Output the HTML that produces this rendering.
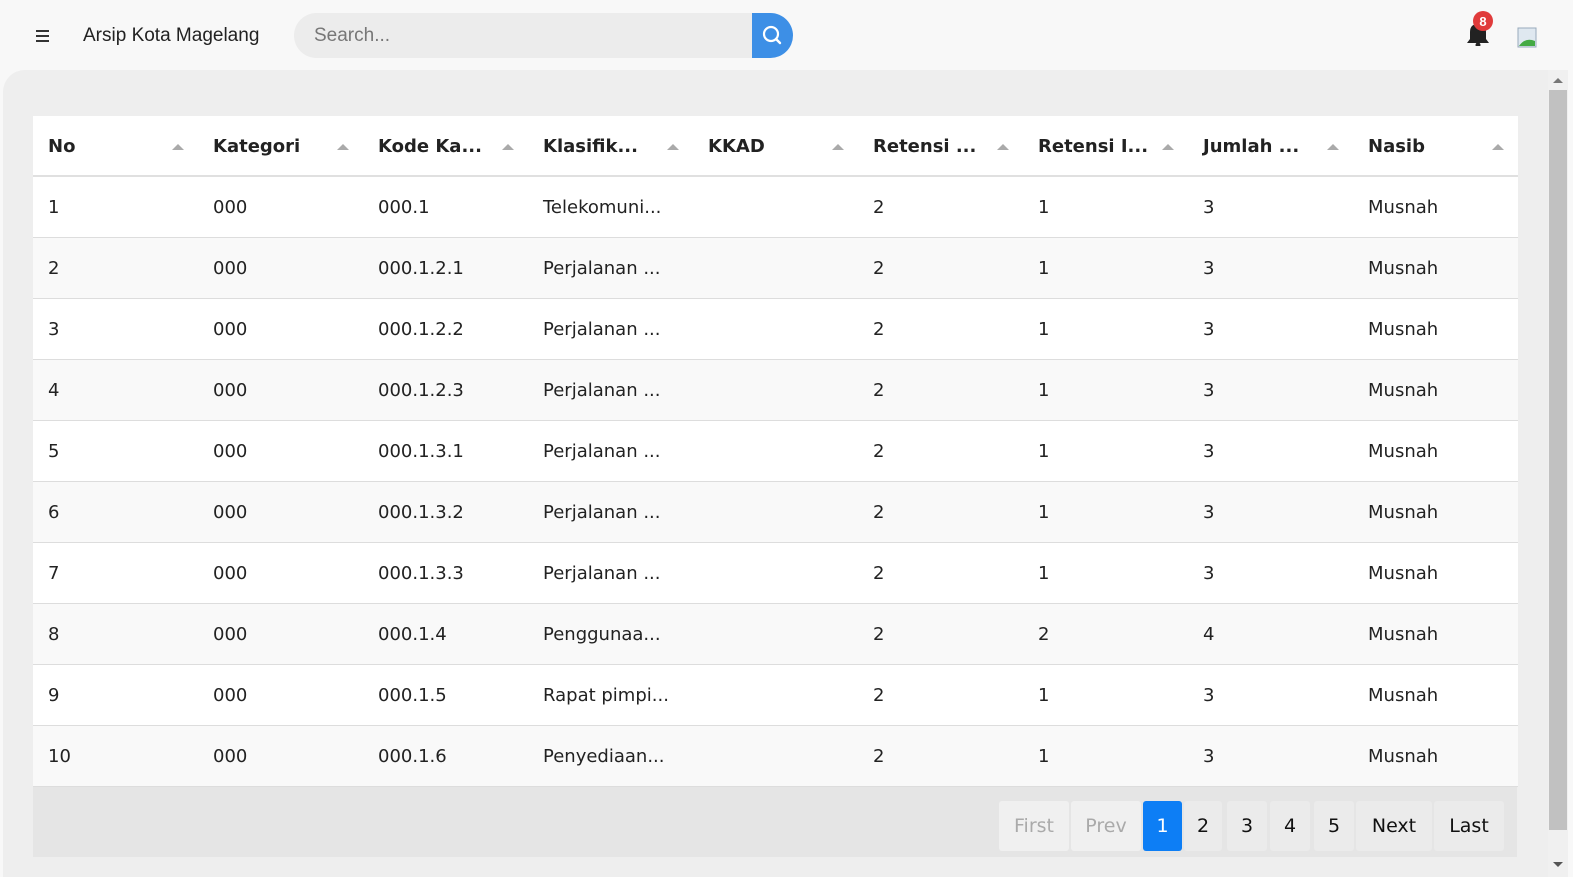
<!DOCTYPE html>
<html><head><style>
*{box-sizing:border-box;margin:0;padding:0}
html,body{width:1573px;height:877px;overflow:hidden}
body{background:#f8f8f8;font-family:"DejaVu Sans","Liberation Sans",sans-serif;color:#222;position:relative}
.top{position:absolute;left:0;top:0;width:1573px;height:70px}
.ham{position:absolute;left:36px;top:30px;width:13px}
.ham i{display:block;height:2px;background:#333;margin-bottom:3px}
.title{position:absolute;left:83px;top:25px;font-family:"Liberation Sans",sans-serif;font-size:19px;color:#222}
.search{position:absolute;left:294px;top:13px;width:458px;height:45px;background:#ececec;border-radius:23px 0 0 23px;font-family:"Liberation Sans",sans-serif;font-size:19px;color:#777;padding:12px 20px}
.sbtn{position:absolute;left:752px;top:13px;width:41px;height:45px;background:#3d8fe6;border-radius:0 23px 23px 0}
.panel{position:absolute;left:3px;top:70px;width:1545px;height:807px;background:#eeeeee;border-radius:22px 0 0 0}
table{position:absolute;left:33px;top:116px;width:1484px;border-collapse:collapse;table-layout:fixed}
td,th{height:61px;padding-left:15px;text-align:left;font-size:18px;border-bottom:1px solid #ddd;white-space:nowrap;overflow:hidden;padding-top:2px}
th{height:60px;font-weight:bold;position:relative;border-bottom:2px solid #e0e0e0}
th:after{content:"";position:absolute;right:14px;top:28px;border:6px solid transparent;border-bottom:6px solid #aaa;border-top:0}
tr{background:#fff}
tbody tr:nth-child(even){background:#f9f9f9}
.pag{position:absolute;left:33px;top:787px;width:1484px;height:70px;background:#e5e5e5}
.pb{position:absolute;top:14px;height:50px;background:#ebebeb;font-size:19px;text-align:center;line-height:50px;border-radius:3px;color:#111}
.sb{position:absolute;left:1548px;top:70px;width:20px;height:807px;background:#f0f0f0}
</style></head><body>
<div class="top">
<div class="ham"><i></i><i></i><i></i></div>
<div class="title">Arsip Kota Magelang</div>
<div class="search">Search...</div>
<div class="sbtn"><svg width="41" height="45"><circle cx="19" cy="21" r="7" fill="none" stroke="#fff" stroke-width="2.2"/><line x1="24" y1="26" x2="28" y2="30" stroke="#fff" stroke-width="2.4" stroke-linecap="round"/></svg></div>
<svg style="position:absolute;left:1464px;top:10px" width="34" height="36"><path d="M3 33 L25 33 L22 29 L22 22 Q22 14 14 14 Q6 14 6 22 L6 29 Z" fill="#222"/><circle cx="14" cy="35" r="2.5" fill="#222"/><circle cx="19" cy="11" r="10" fill="#e03b3b"/><text x="19" y="16" font-size="13" font-weight="bold" fill="#fff" text-anchor="middle" font-family="Liberation Sans">8</text></svg>
<svg style="position:absolute;left:1517px;top:27px" width="22" height="22"><rect x="1" y="1" width="18" height="19" fill="#dfe8f0" stroke="#9ab"/><path d="M2 19 Q8 10 18 14 L18 19Z" fill="#4a4"/></svg>
</div>
<div class="panel"></div>
<table>
<colgroup><col span="9" style="width:165px"></colgroup>
<thead><tr><th>No</th><th>Kategori</th><th>Kode Ka...</th><th>Klasifik...</th><th>KKAD</th><th>Retensi ...</th><th>Retensi I...</th><th>Jumlah ...</th><th>Nasib</th></tr></thead>
<tbody>
<tr><td>1</td><td>000</td><td>000.1</td><td>Telekomuni...</td><td></td><td>2</td><td>1</td><td>3</td><td>Musnah</td></tr>
<tr><td>2</td><td>000</td><td>000.1.2.1</td><td>Perjalanan ...</td><td></td><td>2</td><td>1</td><td>3</td><td>Musnah</td></tr>
<tr><td>3</td><td>000</td><td>000.1.2.2</td><td>Perjalanan ...</td><td></td><td>2</td><td>1</td><td>3</td><td>Musnah</td></tr>
<tr><td>4</td><td>000</td><td>000.1.2.3</td><td>Perjalanan ...</td><td></td><td>2</td><td>1</td><td>3</td><td>Musnah</td></tr>
<tr><td>5</td><td>000</td><td>000.1.3.1</td><td>Perjalanan ...</td><td></td><td>2</td><td>1</td><td>3</td><td>Musnah</td></tr>
<tr><td>6</td><td>000</td><td>000.1.3.2</td><td>Perjalanan ...</td><td></td><td>2</td><td>1</td><td>3</td><td>Musnah</td></tr>
<tr><td>7</td><td>000</td><td>000.1.3.3</td><td>Perjalanan ...</td><td></td><td>2</td><td>1</td><td>3</td><td>Musnah</td></tr>
<tr><td>8</td><td>000</td><td>000.1.4</td><td>Penggunaa...</td><td></td><td>2</td><td>2</td><td>4</td><td>Musnah</td></tr>
<tr><td>9</td><td>000</td><td>000.1.5</td><td>Rapat pimpi...</td><td></td><td>2</td><td>1</td><td>3</td><td>Musnah</td></tr>
<tr><td>10</td><td>000</td><td>000.1.6</td><td>Penyediaan...</td><td></td><td>2</td><td>1</td><td>3</td><td>Musnah</td></tr>
</tbody></table>
<div class="pag">
<div class="pb" style="left:966px;width:70px;color:#aaa;background:#f0f0f0">First</div>
<div class="pb" style="left:1038px;width:70px;color:#aaa;background:#f0f0f0">Prev</div>
<div class="pb" style="left:1110px;width:39px;background:#0d7ef5;color:#fff">1</div>
<div class="pb" style="left:1151px;width:38px">2</div>
<div class="pb" style="left:1194px;width:40px">3</div>
<div class="pb" style="left:1237px;width:40px">4</div>
<div class="pb" style="left:1281px;width:40px">5</div>
<div class="pb" style="left:1323px;width:76px">Next</div>
<div class="pb" style="left:1401px;width:70px">Last</div>
</div>
<div class="sb"><div style="position:absolute;left:1px;top:20px;width:18px;height:740px;background:#c1c1c1"></div>
<div style="position:absolute;left:5px;top:8px;border:5px solid transparent;border-bottom:5px solid #777;border-top:0"></div>
<div style="position:absolute;left:5px;top:792px;border:5px solid transparent;border-top:5px solid #555;border-bottom:0"></div></div>
</body></html>
